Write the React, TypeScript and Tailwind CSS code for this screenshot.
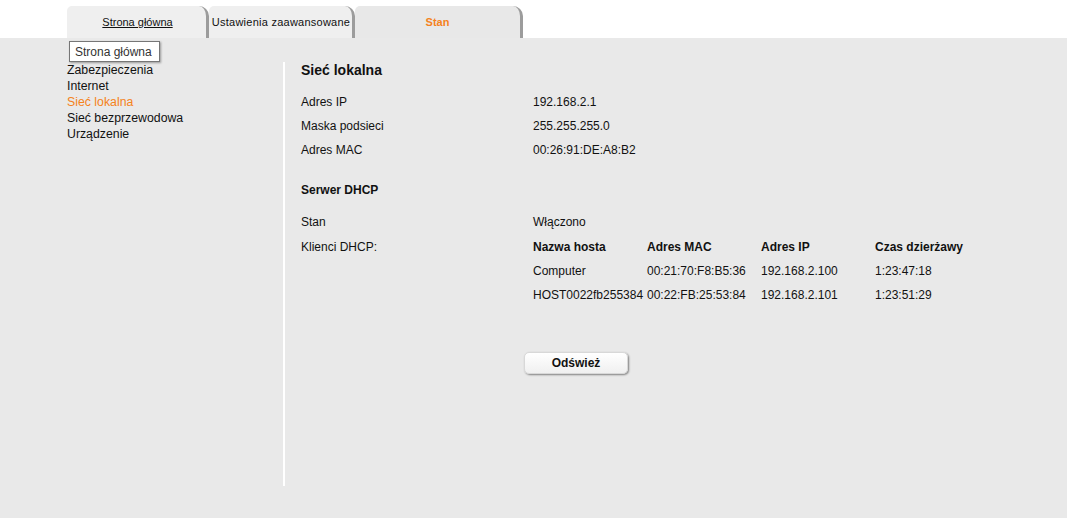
import React from "react";

const font = { fontFamily: '"Liberation Sans", Arial, sans-serif' };

function Tab({ w, children, active }: { w: string; children: React.ReactNode; active?: boolean }) {
  return (
    <div
      className={`${w} h-[32px] flex items-center justify-center rounded-tl-[5px] rounded-tr-[10px] border-r-[3px] border-[#9c9c9c] ${
        active ? "bg-[#e8e8e8]" : "bg-[#efefef]"
      }`}
    >
      {children}
    </div>
  );
}

export default function App() {
  const clients = [
    ["Computer", "00:21:70:F8:B5:36", "192.168.2.100", "1:23:47:18"],
    ["HOST0022fb255384", "00:22:FB:25:53:84", "192.168.2.101", "1:23:51:29"],
  ];
  return (
    <div className="w-[1067px] h-[518px] bg-white text-[#111] relative overflow-hidden" style={font}>
      <div className="flex pl-[67px] pt-[6px] h-[38px]">
        <Tab w="w-[142px]">
          <span className="text-[11px] underline text-[#111] pl-[2px]">Strona główna</span>
        </Tab>
        <Tab w="w-[146px]">
          <span className="text-[11px] tracking-[0.25px] text-[#111] ml-[1px] whitespace-nowrap">Ustawienia zaawansowane</span>
        </Tab>
        <Tab w="w-[168px]" active>
          <span className="text-[11px] font-bold text-[#f58220]">Stan</span>
        </Tab>
      </div>
      <div className="bg-[#e9e9e9] h-[480px] flex pl-[67px] pt-[24px]">
        <div className="w-[216px] text-[12.3px] leading-[16px]">
          <div>Zabezpieczenia</div>
          <div>Internet</div>
          <div className="text-[#f58220]">Sieć lokalna</div>
          <div>Sieć bezprzewodowa</div>
          <div>Urządzenie</div>
        </div>
        <div className="border-l-2 border-white h-[424px] pl-[16px] text-[12px]">
          <div className="font-bold text-[14px] leading-[16px]">Sieć lokalna</div>
          <div className="mt-[12px]">
            {[
              ["Adres IP", "192.168.2.1"],
              ["Maska podsieci", "255.255.255.0"],
              ["Adres MAC", "00:26:91:DE:A8:B2"],
            ].map(([a, b]) => (
              <div key={a} className="flex h-[24px] items-center">
                <div className="w-[232px]">{a}</div>
                <div>{b}</div>
              </div>
            ))}
          </div>
          <div className="mt-[16px] h-[24px] flex items-center font-bold">Serwer DHCP</div>
          <div className="mt-[8px] flex h-[24px] items-center">
            <div className="w-[232px]">Stan</div>
            <div>Włączono</div>
          </div>
          <div className="flex mt-[1px]">
            <div className="w-[232px] h-[24px] flex items-center">Klienci DHCP:</div>
            <div>
              <div className="flex h-[24px] items-center font-bold">
                <div className="w-[114px]">Nazwa hosta</div>
                <div className="w-[114px]">Adres MAC</div>
                <div className="w-[114px]">Adres IP</div>
                <div className="w-[114px]">Czas dzierżawy</div>
              </div>
              {clients.map((r) => (
                <div key={r[0]} className="flex h-[24px] items-center whitespace-nowrap">
                  <div className="w-[114px]">{r[0]}</div>
                  <div className="w-[114px]">{r[1]}</div>
                  <div className="w-[114px]">{r[2]}</div>
                  <div className="w-[114px]">{r[3]}</div>
                </div>
              ))}
            </div>
          </div>
          <div className="mt-[45px] pl-[223px]">
            <button
              className="w-[104px] h-[22px] rounded-[5px] bg-gradient-to-b from-white to-[#f0f0f0] border border-[#d8d8d8] shadow-[1px_1px_2px_rgba(0,0,0,0.45)] font-bold text-[12px] text-[#111] flex items-center justify-center"
              style={font}
            >
              Odśwież
            </button>
          </div>
        </div>
      </div>
      <div className="absolute left-[69px] top-[41px] w-[91px] h-[21px] bg-white border border-[#767676] shadow-[1px_1px_2px_rgba(0,0,0,0.35)] text-[12px] text-[#333] flex items-center pl-[5px] whitespace-nowrap">
        Strona główna
      </div>
    </div>
  );
}
